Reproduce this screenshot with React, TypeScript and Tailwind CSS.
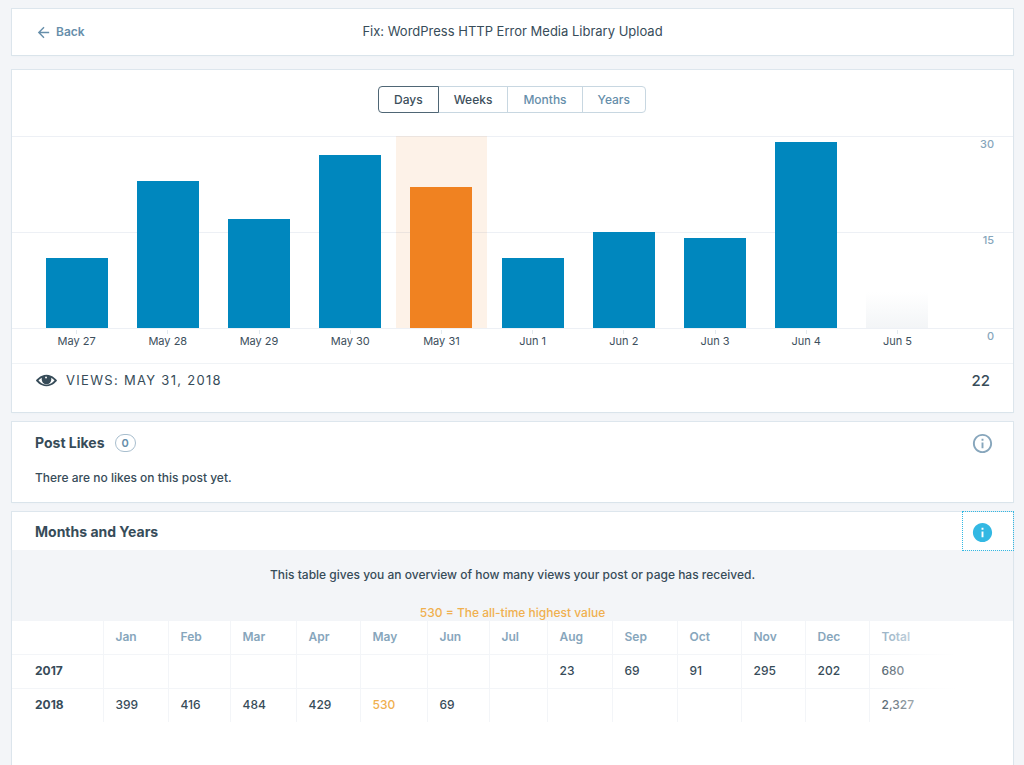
import { ReactNode, useState } from 'react';
import clsx from 'clsx';

type DayViews = {
  label: string;
  views: number;
};

type YearRow = {
  year: number;
  months: (number | null)[];
  total: string;
};

const MAX_VIEWS = 30;
const HIGHEST = 530;

const days: DayViews[] = [
  { label: 'May 27', views: 11 },
  { label: 'May 28', views: 23 },
  { label: 'May 29', views: 17 },
  { label: 'May 30', views: 27 },
  { label: 'May 31', views: 22 },
  { label: 'Jun 1', views: 11 },
  { label: 'Jun 2', views: 15 },
  { label: 'Jun 3', views: 14 },
  { label: 'Jun 4', views: 29 },
  { label: 'Jun 5', views: 0 },
];

const periods = ['Days', 'Weeks', 'Months', 'Years'];

const columns = [
  { name: 'Jan', width: 'w-[65px]' },
  { name: 'Feb', width: 'w-[62px]' },
  { name: 'Mar', width: 'w-[66px]' },
  { name: 'Apr', width: 'w-[64px]' },
  { name: 'May', width: 'w-[67px]' },
  { name: 'Jun', width: 'w-[62px]' },
  { name: 'Jul', width: 'w-[58px]' },
  { name: 'Aug', width: 'w-[65px]' },
  { name: 'Sep', width: 'w-[65px]' },
  { name: 'Oct', width: 'w-[64px]' },
  { name: 'Nov', width: 'w-[64px]' },
  { name: 'Dec', width: 'w-[64px]' },
];

const years: YearRow[] = [
  {
    year: 2017,
    months: [null, null, null, null, null, null, null, 23, 69, 91, 295, 202],
    total: '680',
  },
  {
    year: 2018,
    months: [399, 416, 484, 429, 530, 69, null, null, null, null, null, null],
    total: '2,327',
  },
];

const ArrowLeftIcon = () => (
  <svg viewBox="0 0 24 24" className="size-[17px]" fill="currentColor" aria-hidden="true">
    <path d="M20 11H7.83l5.59-5.59L12 4l-8 8 8 8 1.41-1.41L7.83 13H20v-2z" />
  </svg>
);

const EyeIcon = () => (
  <svg viewBox="0 0 24 24" className="size-[23px]" fill="currentColor" aria-hidden="true">
    <path
      fillRule="evenodd"
      d="M12 6C5.188 6 1 12 1 12s4.188 6 11 6 11-6 11-6-4.188-6-11-6zm0 10.4c-3.943 0-6.926-2.884-8.379-4.4.9-.95 2.1-2 3.6-2.8A5 5 0 0 0 7 11a5 5 0 0 0 10 0 5 5 0 0 0-.22-1.8c1.5.8 2.7 1.85 3.6 2.8-1.455 1.516-4.438 4.4-8.38 4.4zM11.5 7.8a1 1 0 1 1-.001 2A1 1 0 0 1 11.5 7.8z"
    />
  </svg>
);

const InfoIcon = ({ filled }: { filled?: boolean }) => (
  <svg viewBox="0 0 24 24" className="size-[23px]" fill="currentColor" aria-hidden="true">
    {filled ? (
      <path d="M12 2C6.477 2 2 6.477 2 12s4.477 10 10 10 10-4.477 10-10S17.523 2 12 2zm1 15h-2v-6h2v6zm0-8h-2V7h2v2z" />
    ) : (
      <path d="M13 9h-2V7h2v2zm0 2h-2v6h2v-6zm-1-7c-4.411 0-8 3.589-8 8s3.589 8 8 8 8-3.589 8-8-3.589-8-8-8m0-2c5.523 0 10 4.477 10 10s-4.477 10-10 10S2 17.523 2 12 6.477 2 12 2z" />
    )}
  </svg>
);

const Card = ({ className, children }: { className?: string; children: ReactNode }) => (
  <section
    className={clsx(
      'bg-white shadow-[0_0_0_1px_rgba(200,215,225,0.5),0_1px_2px_#e9eff3]',
      className
    )}
  >
    {children}
  </section>
);

function PeriodTabs() {
  const [active, setActive] = useState('Days');

  return (
    <div className="flex justify-center">
      {periods.map((period) => (
        <button
          key={period}
          type="button"
          onClick={() => setActive(period)}
          className={clsx(
            'h-[27px] border -ml-px px-[15px] font-medium first:rounded-l last:rounded-r',
            period === active ? 'relative border-[#4f6675]' : 'border-[#c8d7e1]',
            period === active || period === 'Weeks' ? 'text-[#3d4f5c]' : 'text-[#668eaa]'
          )}
        >
          {period}
        </button>
      ))}
    </div>
  );
}

function ViewsChart({ selected }: { selected: string }) {
  return (
    <div className="grid mt-[23px]">
      <div className="col-start-1 row-start-1 grid grid-rows-[96px_96px_35px] text-right text-[11px] leading-[14px] font-medium text-[#87a6bc]">
        {[30, 15, 0].map((tick) => (
          <div key={tick} className="border-t border-[#edf0f5] pr-[19px]">
            {tick}
          </div>
        ))}
      </div>
      <div className="col-start-1 row-start-1 flex ml-[19px] mr-[70px]">
        {days.map((day) => (
          <div key={day.label} className="flex flex-1 flex-col items-center">
            <div
              className={clsx(
                'flex h-[192px] w-full items-end justify-center',
                day.label === selected && 'bg-[#f08221]/10'
              )}
            >
              {day.views > 0 ? (
                <div
                  className={clsx(
                    'w-[68%]',
                    day.label === selected ? 'bg-[#f08221]' : 'bg-[#0087be]'
                  )}
                  style={{ height: `${(day.views / MAX_VIEWS) * 100}%` }}
                />
              ) : (
                <div className="h-9 w-[68%] bg-linear-to-b from-white to-[#f3f5f7]" />
              )}
            </div>
            <div className="mt-0.5 h-1 w-px bg-[#e3eaef]" />
            <div className="text-[11px] leading-[14px] font-normal text-[#3d4f5c]">
              {day.label}
            </div>
          </div>
        ))}
      </div>
    </div>
  );
}

function YearsTable() {
  return (
    <div className="relative">
      <table className="w-full table-fixed text-left">
        <thead className="text-[#87a6bc]">
          <tr className="h-[33px] border-b border-[#f3f5f8]">
            <th className="w-[91px]" />
            {columns.map((column) => (
              <th
                key={column.name}
                className={clsx('border-l border-[#f3f5f8] pl-3 font-semibold', column.width)}
              >
                {column.name}
              </th>
            ))}
            <th className="border-l border-[#f3f5f8] pl-3 font-semibold">Total</th>
          </tr>
        </thead>
        <tbody>
          {years.map((row) => (
            <tr key={row.year} className="h-[34px] border-b border-[#f3f5f8] last:border-b-0">
              <th className="pl-[23px] font-bold">{row.year}</th>
              {row.months.map((views, index) => (
                <td
                  key={columns[index].name}
                  className={clsx(
                    'border-l border-[#f3f5f8] pl-3',
                    views === HIGHEST && 'text-[#f0b04f]'
                  )}
                >
                  {views}
                </td>
              ))}
              <td className="border-l border-[#f3f5f8] pl-3">{row.total}</td>
            </tr>
          ))}
        </tbody>
      </table>
      <div className="pointer-events-none absolute inset-y-0 right-0 w-[144px] bg-linear-to-r from-transparent to-white to-60%" />
    </div>
  );
}

export default function App() {
  return (
    <main className="flex min-h-screen flex-col bg-[#f3f5f8] pl-3 pr-[11px] pt-[9px] font-[Inter,'Liberation_Sans',sans-serif] text-xs font-medium text-[#374c59]">
      <Card className="grid h-[46px] grid-cols-[1fr_auto_1fr] items-center px-[23px]">
        <a href="#stats" className="flex items-center gap-1 font-semibold text-[#668eaa]">
          <ArrowLeftIcon />
          Back
        </a>
        <h1 className="text-[13px] font-normal">Fix: WordPress HTTP Error Media Library Upload</h1>
      </Card>

      <Card className="mt-[15px] pt-4">
        <PeriodTabs />
        <ViewsChart selected="May 31" />
        <div className="flex h-[49px] items-start justify-between border-t border-[#f0f3f6] px-[23px] pt-[5px]">
          <div className="flex items-center gap-2 text-[13px] font-normal tracking-widest">
            <EyeIcon />
            VIEWS: MAY 31, 2018
          </div>
          <div className="text-[15px] leading-6">22</div>
        </div>
      </Card>

      <Card className="mt-[10px] h-20">
        <div className="flex h-[42px] items-center justify-between pl-[23px] pr-[19px]">
          <div className="flex items-center gap-[10px]">
            <h2 className="text-sm font-bold">Post Likes</h2>
            <span className="rounded-full border border-[#a8bece] px-1.5 text-[11px] leading-4 font-semibold text-[#668eaa]">
              0
            </span>
          </div>
          <button type="button" aria-label="About post likes" className="text-[#87a6bc]">
            <InfoIcon />
          </button>
        </div>
        <p className="px-[23px] pt-1.5">There are no likes on this post yet.</p>
      </Card>

      <Card className="mt-[10px] grow">
        <div className="flex h-[38px] items-center justify-between pl-[23px]">
          <h2 className="pt-0.5 text-sm font-bold">Months and Years</h2>
          <button
            type="button"
            aria-label="About months and years"
            className="h-full w-[50px] pl-2 pt-0.5 text-[#33b8e3] outline-1 outline-dotted outline-[#33b8e3]"
          >
            <InfoIcon filled />
          </button>
        </div>
        <div className="h-[71px] bg-[#f3f5f8] pt-[17px] text-center">
          <p>This table gives you an overview of how many views your post or page has received.</p>
          <p className="mt-[22px] text-[#f0b04f]">530 = The all-time highest value</p>
        </div>
        <YearsTable />
      </Card>
    </main>
  );
}
